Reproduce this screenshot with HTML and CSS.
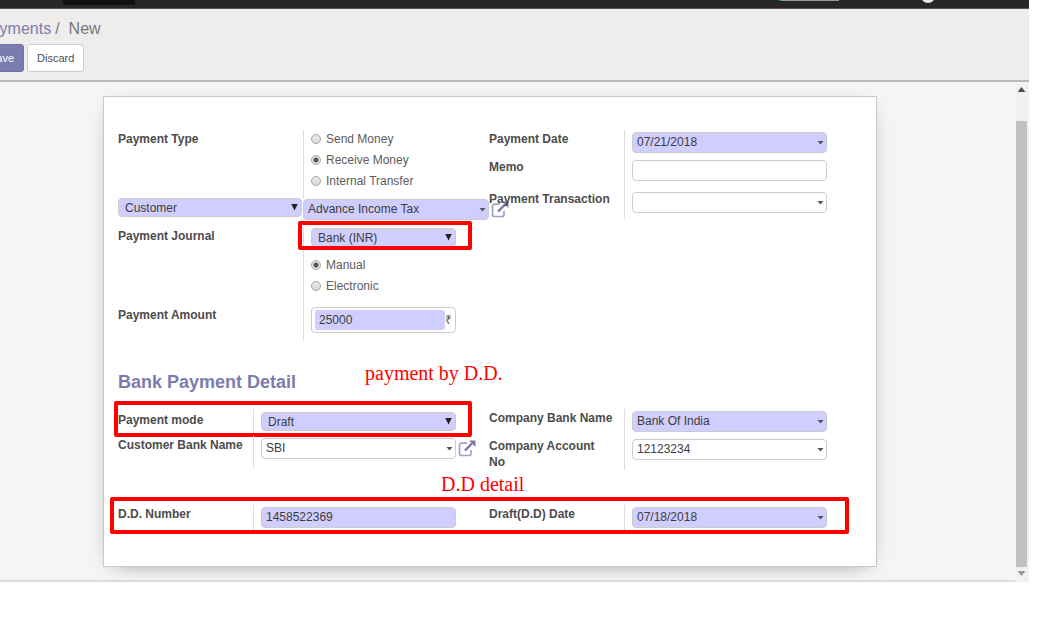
FILE: index.html
```html
<!DOCTYPE html>
<html lang="en">
<head>
<meta charset="utf-8">
<title>Payments / New</title>
<link rel="stylesheet" href="styles.css">
</head>
<body>
<svg class="sprite" aria-hidden="true">
  <symbol id="external" viewBox="0 0 18 17">
    <path d="M9 3.2H3.5a2 2 0 0 0-2 2v8.3a2 2 0 0 0 2 2H11a2 2 0 0 0 2-2V10" fill="none" stroke="#a3a1ca" stroke-width="1.7"/>
    <path d="M7 10.5 14 3.5" fill="none" stroke="#7c7aab" stroke-width="2.4"/>
    <path d="M11 .5h6.500v6.500z" fill="#7c7aab"/>
  </symbol>
</svg>
<div class="app">
  <div class="topbar"><span class="topbar-active"></span><span class="topbar-strip"></span><span class="topbar-avatar"></span></div>
  <header class="control-panel">
    <nav class="breadcrumb"><a href="#">Payments</a><span class="sep">/</span><span>New</span></nav>
    <div class="actions"><button class="btn primary" type="button">Save</button><button class="btn" type="button">Discard</button></div>
  </header>
  <div class="view">
    <main class="canvas">
      <form class="sheet">
        <div class="columns">
          <div class="group wide">
            <div class="row type-row">
              <span class="label" id="l-type">Payment Type</span>
              <div class="cell radios" role="radiogroup" aria-labelledby="l-type">
                <label><input type="radio" name="type">Send Money</label>
                <label><input type="radio" name="type" checked>Receive Money</label>
                <label><input type="radio" name="type">Internal Transfer</label>
              </div>
            </div>
            <div class="row partner-row">
              <div class="select"><select aria-label="Partner type"><option>Customer</option></select></div>
              <div class="combo partner required"><input type="text" aria-label="Partner" value="Advance Income Tax"><button class="open" type="button" aria-label="Open partner"><svg><use href="#external"/></svg></button></div>
            </div>
            <div class="row journal-row">
              <label class="label" for="journal">Payment Journal</label>
              <div class="cell">
                <div class="select"><select id="journal"><option>Bank (INR)</option></select></div>
                <div class="radios method" role="radiogroup" aria-label="Payment method">
                  <label><input type="radio" name="method" checked>Manual</label>
                  <label><input type="radio" name="method">Electronic</label>
                </div>
              </div>
              <div class="mark mark-journal"></div>
            </div>
            <div class="row amount-row">
              <label class="label" for="amount">Payment Amount</label>
              <div class="cell"><div class="money"><input id="amount" type="text" value="25000"><span>₹</span></div></div>
            </div>
          </div>
          <div class="group">
            <div class="row short">
              <label class="label" for="date">Payment Date</label>
              <div class="cell"><div class="combo required"><input id="date" type="text" value="07/21/2018"></div></div>
            </div>
            <div class="row memo-row">
              <label class="label" for="memo">Memo</label>
              <div class="cell"><input id="memo" class="text" type="text"></div>
            </div>
            <div class="row last">
              <label class="label" for="transaction">Payment Transaction</label>
              <div class="cell"><div class="combo"><input id="transaction" type="text"></div></div>
            </div>
          </div>
        </div>
        <div class="heading">
          <h2>Bank Payment Detail</h2>
          <span class="note note-mode">payment by D.D.</span>
        </div>
        <div class="columns bank">
          <div class="group">
            <div class="row mode-row">
              <label class="label" for="mode">Payment mode</label>
              <div class="cell"><div class="select"><select id="mode"><option>Draft</option></select></div></div>
              <div class="mark mark-mode"></div>
            </div>
            <div class="row customer-bank">
              <label class="label" for="cbank">Customer Bank Name</label>
              <div class="cell"><div class="combo"><input id="cbank" type="text" value="SBI"><button class="open" type="button" aria-label="Open bank"><svg><use href="#external"/></svg></button></div></div>
            </div>
          </div>
          <div class="group">
            <div class="row short">
              <label class="label" for="company-bank">Company Bank Name</label>
              <div class="cell"><div class="combo required"><input id="company-bank" type="text" value="Bank Of India"></div></div>
            </div>
            <div class="row account">
              <label class="label" for="account">Company Account No</label>
              <div class="cell"><div class="combo"><input id="account" type="text" value="12123234"></div></div>
            </div>
          </div>
        </div>
        <div class="columns draft">
          <div class="row">
            <label class="label" for="ddno">D.D. Number</label>
            <div class="cell"><input id="ddno" class="text required" type="text" value="1458522369"></div>
          </div>
          <div class="row">
            <label class="label" for="dddate">Draft(D.D) Date</label>
            <div class="cell"><div class="combo required"><input id="dddate" type="text" value="07/18/2018"></div></div>
          </div>
          <div class="mark mark-draft"></div>
          <span class="note note-draft">D.D detail</span>
        </div>
      </form>
    </main>
    <div class="scrollbar" aria-hidden="true"><i class="up"></i><span class="thumb"></span><i class="down"></i></div>
  </div>
</div>
</body>
</html>
```
FILE: styles.css
```css
* { box-sizing: border-box; }
body {
  margin: 0;
  background: #fff;
  color: #4c4c4c;
  font: 12px/16px "Liberation Sans", Arial, sans-serif;
}
.sprite { display: none; }
input, select, button { font: inherit; color: inherit; margin: 0; }
.app { margin-right: 10px; }

.topbar {
  position: relative;
  height: 9px;
  overflow: hidden;
  background: #272727;
  border-bottom: 1px solid #555;
}
.topbar-active { position: absolute; left: 63px; top: 0; width: 72px; height: 5px; background: #101010; }
.topbar-strip { position: absolute; right: 190px; top: 0; width: 61px; height: 1px; background: #999; border-left: 3px solid #176b5b; }
.topbar-avatar { position: absolute; right: 94px; top: -11px; width: 14px; height: 14px; border-radius: 50%; background: #e8e8e8; }

.control-panel {
  padding: 9px 0 8px;
  overflow: hidden;
  background: #eeedeb;
  border-bottom: 2px solid #b9b9b9;
}
.breadcrumb {
  display: flex;
  margin-left: -20px;
  font-size: 16px;
  line-height: 22px;
  color: #777;
}
.breadcrumb a { color: #7c7bad; text-decoration: none; }
.sep { margin: 0 9px 0 4px; }
.actions { display: flex; gap: 3px; margin: 4px 0 0 -21px; }
.btn {
  height: 28px;
  padding: 0 9px;
  border: 1px solid #ccc;
  border-radius: 3px;
  background: #fff;
  font-size: 11px;
}
.btn.primary { background: #7c7bad; border-color: #7473a6; color: #fff; }

.view { display: flex; }
.canvas {
  flex: 1;
  min-width: 0;
  padding: 14px 138px 13px 103px;
  border-bottom: 2px solid #ddd;
  background: repeating-conic-gradient(#f2f2f2 0 25%, #f8f8f8 0 50%) 0 0 / 4px 4px;
}
.sheet {
  padding: 33px 16px 36px 14px;
  border: 1px solid #c8c8d3;
  background: #fff;
  box-shadow: 0 5px 20px -12px #555;
}
.scrollbar {
  display: flex;
  flex-direction: column;
  align-items: center;
  width: 14px;
  padding: 5px 1px 6px 0;
  background: #f1f1f1;
}
.scrollbar i { width: 8px; height: 5px; background: #505050; }
.up { clip-path: polygon(50% 0, 100% 100%, 0 100%); }
.scrollbar .down { background: #9a9a9a; clip-path: polygon(0 0, 100% 0, 50% 100%); }
.thumb { flex: 1; width: 11px; margin: 29px 0 4px; background: #c1c1c1; }

.columns {
  display: grid;
  grid-template-columns: minmax(0, 1fr) minmax(0, 1fr);
  align-items: start;
}
.row { position: relative; display: grid; grid-template-columns: 135px minmax(0, 1fr); }
.wide .row { grid-template-columns: 185px minmax(0, 1fr); }
.label { padding: 1px 8px 0 0; font-weight: bold; }
.cell { padding: 2px 33px 0 7px; border-left: 1px solid #ddd; }

.type-row { height: 68px; }
.partner-row { height: 29px; align-items: start; }
.journal-row { height: 79px; }
.amount-row { height: 34px; }
.short { height: 28px; }
.memo-row { height: 32px; }
.last { height: 29px; }
.mode-row { height: 27px; }
.mode-row .label { padding-top: 3px; }
.customer-bank { height: 32px; }
.account { min-height: 33px; }
.account .label { padding-right: 24px; }

.radios { display: flex; flex-direction: column; gap: 3px; }
.cell.radios { padding-top: 0; }
.method { margin-top: 9px; }
.radios label { display: flex; align-items: center; height: 18px; color: #5c5c5c; }
.radios input {
  appearance: none;
  width: 10px;
  height: 10px;
  margin-right: 5px;
  border: 1px solid #a5a5a5;
  border-radius: 50%;
  background: linear-gradient(#e9e9e9, #d9d9d9);
}
.radios input:checked { background: radial-gradient(circle, #555 0 2px, #e2e2e2 3px); }

.text, .combo > input, .select select {
  display: block;
  width: 100%;
  height: 21px;
  padding: 0 4px 2px;
  border: 1px solid #ccc;
  border-radius: 4px;
  background: #fff;
  color: #3c3c3c;
}
.text.required, .combo.required > input, .select select { background: #d0ceff; }
.select, .combo { position: relative; }
.select select { appearance: none; height: 19px; padding: 0 6px; }
.select::after, .combo::after {
  content: "";
  position: absolute;
  top: 50%;
  right: 3px;
  width: 7px;
  height: 4px;
  margin-top: -2px;
  background: #555;
  clip-path: polygon(0 0, 100% 0, 50% 100%);
  pointer-events: none;
}
.select::after { right: 4px; height: 7px; margin-top: -4px; background: #222; }
.mode-row .cell { padding-top: 3px; }
.journal-row .cell { padding-top: 1px; }
.partner-row .select { margin-right: 1px; }
.partner { margin-top: 1px; }
.open {
  position: absolute;
  left: calc(100% + 2px);
  top: 2px;
  width: 18px;
  height: 17px;
  padding: 0;
  border: 0;
  background: none;
}
.open svg { display: block; width: 18px; height: 17px; }
.amount-row .cell { padding-top: 1px; }
.money {
  display: flex;
  align-items: center;
  height: 26px;
  padding: 0 3px;
  border: 1px solid #ccc;
  border-radius: 4px;
}
.money input {
  flex: 1;
  min-width: 0;
  height: 20px;
  padding: 0 4px;
  border: 0;
  border-radius: 3px;
  background: #d0ceff;
  color: #3c3c3c;
}

.heading { position: relative; margin: 30px 0 15px; }
.heading h2 { margin: 0; font-size: 18px; line-height: 24px; color: #7c7bad; }
.draft { position: relative; margin-top: 35px; }
.draft .row { height: 25px; }

.mark { position: absolute; border: 4px solid #f00; border-radius: 2px; pointer-events: none; }
.mark-journal { left: 180px; right: 17px; top: -6px; height: 29px; }
.mark-mode { left: -4px; right: 17px; top: -8px; height: 36px; }
.mark-draft { left: -8px; right: 11px; top: -8px; height: 37px; }
.note {
  position: absolute;
  font: 20px/24px "Liberation Serif", "Times New Roman", serif;
  color: #f00;
  white-space: nowrap;
}
.note-mode { left: 247px; top: -9px; }
.note-draft { left: 323px; top: -33px; }
```
